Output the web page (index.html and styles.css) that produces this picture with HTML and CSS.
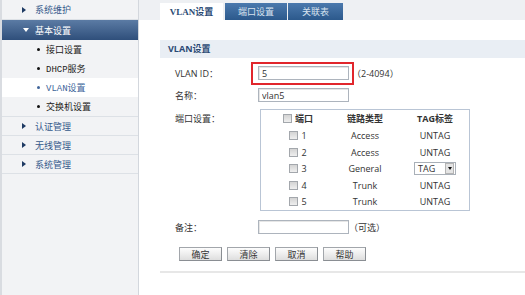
FILE: index.html
```html
<!DOCTYPE html>
<html>
  <head>
    <meta charset="utf-8">
    <title>VLAN设置</title>
    <link rel="stylesheet" href="styles.css">
  </head>
  <body>
    <div class="page">
      <div class="side">
        <ul class="menu">
          <li class="top">系统维护</li>
          <li class="top open">基本设置</li>
          <li class="sub">接口设置</li>
          <li class="sub">DHCP服务</li>
          <li class="sub cur">VLAN设置</li>
          <li class="sub last">交换机设置</li>
          <li class="top">认证管理</li>
          <li class="top">无线管理</li>
          <li class="top">系统管理</li>
        </ul>
      </div>

      <div class="main">
        <div class="tabs">
          <div class="tab on">VLAN设置</div>
          <div class="tab t2">端口设置</div>
          <div class="tab t3">关联表</div>
        </div>

        <div class="content">
          <div class="sec-title">VLAN设置</div>

          <div class="form">
            <div class="row">
              <div class="lbl">VLAN ID：</div>
              <span class="mark"><input class="inp" type="text" value="5"></span>
              <span class="hint h1">（2-4094）</span>
            </div>
            <div class="row">
              <div class="lbl">名称：</div>
              <input class="inp" type="text" value="vlan5">
            </div>
            <div class="row port">
              <div class="lbl">端口设置：</div>
              <div class="grid">
                <div class="tr head">
                  <div class="td"><span class="cb"></span>端口</div>
                  <div class="td">链路类型</div>
                  <div class="td c3">TAG标签</div>
                </div>
                <div class="tr">
                  <div class="td"><span class="cb"></span>1</div>
                  <div class="td">Access</div>
                  <div class="td c3">UNTAG</div>
                </div>
                <div class="tr short">
                  <div class="td"><span class="cb"></span>2</div>
                  <div class="td">Access</div>
                  <div class="td c3">UNTAG</div>
                </div>
                <div class="tr">
                  <div class="td"><span class="cb"></span>3</div>
                  <div class="td">General</div>
                  <div class="td c3">
                    <span class="sel"><span class="sel-txt">TAG</span><span class="sel-btn"></span></span>
                  </div>
                </div>
                <div class="tr short">
                  <div class="td"><span class="cb"></span>4</div>
                  <div class="td">Trunk</div>
                  <div class="td c3">UNTAG</div>
                </div>
                <div class="tr">
                  <div class="td"><span class="cb"></span>5</div>
                  <div class="td">Trunk</div>
                  <div class="td c3">UNTAG</div>
                </div>
              </div>
            </div>
            <div class="row note">
              <div class="lbl">备注：</div>
              <input class="inp" type="text" value="">
              <span class="hint">（可选）</span>
            </div>

            <div class="btns">
              <button class="btn">确定</button>
              <button class="btn">清除</button>
              <button class="btn">取消</button>
              <button class="btn">帮助</button>
            </div>
          </div>

          <div class="rule"></div>
        </div>
      </div>
    </div>
  </body>
</html>
```

FILE: styles.css
```css
  *{
    margin: 0;
    padding: 0;
    box-sizing: border-box;
  }
  body{
    background: #fff;
    font: 9px "Open Sans", "Noto Sans CJK SC", sans-serif;
    color: #333;
  }
  .page{
    display: flex;
    height: 295px;
  }

  /* 左侧菜单 */
  .side{
    width: 139px;
    background: #f2f3f5;
    border-left: 2px solid #d9dce1;
    border-right: 1px solid #d3d7dd;
  }
  .menu{
    list-style: none;
  }
  .top{
    height: 19px;
    display: flex;
    align-items: center;
    padding-left: 20px;
    color: #34598b;
    border-bottom: 1px solid #dde1e6;
  }
  .top::before{
    content: "";
    border-left: 4px solid #1e3a63;
    border-top: 3px solid transparent;
    border-bottom: 3px solid transparent;
    margin-right: 9px;
  }
  .top:first-child{
    height: 20px;
  }
  .top.open{
    height: 20px;
    padding-left: 21px;
    color: #fff;
    background: linear-gradient(#5b7ba4, #2f4f7b);
    border-bottom: none;
  }
  .top.open::before{
    border-top: 4px solid #fff;
    border-left: 3px solid transparent;
    border-right: 3px solid transparent;
    border-bottom: none;
    margin-right: 6px;
  }
  .sub{
    height: 19px;
    display: flex;
    align-items: center;
    padding-left: 35px;
    color: #222;
    font-family: "Liberation Mono", "Noto Sans CJK SC", monospace;
  }
  .sub::before{
    content: "";
    width: 3px;
    height: 3px;
    border-radius: 50%;
    background: #111;
    margin-right: 6px;
  }
  .sub.cur{
    background: #fff;
    color: #40659a;
  }
  .sub.cur::before{
    background: #40659a;
  }
  .sub.last{
    border-bottom: 1px solid #dde1e6;
    height: 20px;
  }

  /* 右侧 */
  .main{
    flex: 1;
  }
  .tabs{
    height: 20px;
    background: #eef0f3;
    padding: 3px 0 0 21px;
    display: flex;
  }
  .tab{
    width: 62px;
    height: 17px;
    display: flex;
    align-items: center;
    justify-content: center;
    background: linear-gradient(#4b79ad, #2c598c);
    color: #d8e3ef;
  }
  .tab.on{
    width: 63px;
    background: #fff;
    color: #2b4a74;
    font-family: "Liberation Serif", "Noto Sans CJK SC", serif;
    font-weight: bold;
  }
  .tab.t2{
    margin-left: 2px;
  }
  .tab.t3{
    margin-left: 1px;
    width: 55px;
  }

  .content{
    padding-left: 21px;
  }
  .sec-title{
    margin-top: 20px;
    height: 18px;
    line-height: 18px;
    background: #e9eef4;
    padding-left: 8px;
    color: #2b4a74;
    font-weight: bold;
  }
  .form{
    padding: 4px 0 0 15px;
  }
  .row{
    display: flex;
    align-items: center;
    height: 22px;
  }
  .lbl{
    width: 83px;
    color: #333;
  }
  .inp{
    width: 91px;
    height: 14px;
    border: 1px solid #adb4bd;
    box-shadow: inset 1px 1px 0 #e6e6e6;
    padding-left: 3px;
    font: inherit;
    color: #333;
    outline: none;
  }
  .mark{
    position: relative;
    display: flex;
  }
  .mark::after{
    content: "";
    position: absolute;
    left: -7px;
    right: -5px;
    top: -4px;
    bottom: -5px;
    border: 2px solid #e1262c;
  }
  .hint{
    color: #333;
  }
  .hint.h1{
    margin-left: 3px;
  }

  .row.port{
    height: auto;
    align-items: flex-start;
    margin-top: 3px;
  }
  .row.port .lbl{
    line-height: 17px;
    margin-top: 1px;
  }
  .row.note{
    margin-top: 5px;
  }
  .grid{
    width: 210px;
    margin-left: 2px;
    border: 1px solid #b9c5d5;
  }
  .tr{
    display: grid;
    grid-template-columns: 74px 60px 1fr;
    height: 17px;
    align-items: center;
    text-align: center;
  }
  .tr.short{
    height: 16px;
  }
  .tr.head{
    font-weight: bold;
    color: #333;
  }
  .td{
    display: flex;
    align-items: center;
    justify-content: center;
  }
  .td.c3{
    padding-left: 6px;
  }
  .cb{
    width: 9px;
    height: 9px;
    border: 1px solid #a3a7ac;
    background: linear-gradient(#d3d3d3, #efefef);
    margin-right: 3px;
  }
  .sel{
    width: 42px;
    height: 13px;
    border: 1px solid #a9b0b8;
    display: flex;
    align-items: center;
    justify-content: space-between;
    background: #fff;
  }
  .sel-txt{
    padding-left: 3px;
  }
  .sel-btn{
    width: 9px;
    height: 11px;
    margin-right: 1px;
    background: #e4e4e4;
    border: 1px solid #b4b4b4;
    display: flex;
    align-items: center;
    justify-content: center;
  }
  .sel-btn::after{
    content: "";
    border-top: 3px solid #111;
    border-left: 2px solid transparent;
    border-right: 2px solid transparent;
  }

  .btns{
    display: flex;
    gap: 5px;
    margin-top: 9px;
    padding-left: 4px;
  }
  .btn{
    width: 43px;
    height: 14px;
    border: 1px solid #a2a6ab;
    border-right-color: #8a8e93;
    border-bottom-color: #8a8e93;
    background: linear-gradient(#fdfdfd, #dedede);
    font: inherit;
    color: #333;
  }
  .rule{
    margin-top: 10px;
    border-top: 2px solid #e7e7e7;
  }
```
